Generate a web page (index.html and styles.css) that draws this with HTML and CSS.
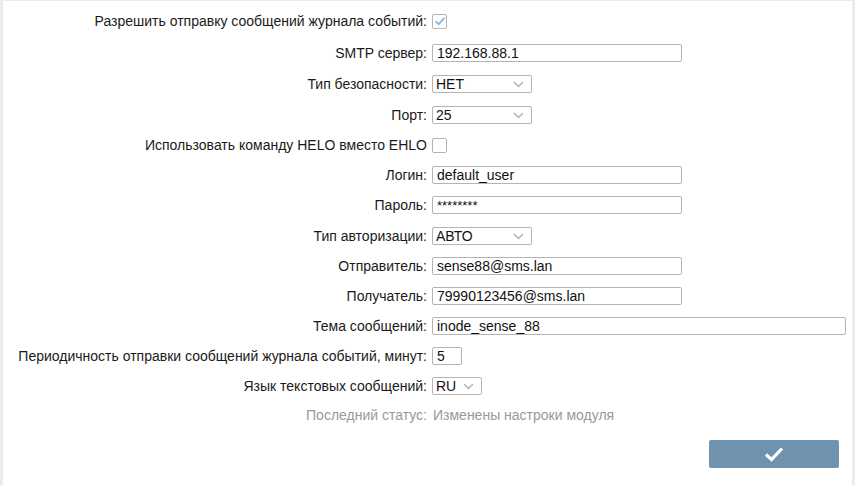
FILE: index.html
```
<!DOCTYPE html>
<html>

<head>
    <title>Настройки журнала событий</title>
    <link rel="stylesheet" href="styles.css">
</head>

<body>
    <div class="panel">
        <div class="form">
            <div class="row first">
                <label>Разрешить отправку сообщений журнала событий:</label>
                <span class="checkbox">
                    <svg width="12" height="10" viewBox="0 0 12 10">
                        <path d="M1.5 5.2 L4.6 8.2 L10.5 1.8" fill="none" stroke="#86b8e4" stroke-width="1.8" />
                    </svg>
                </span>
            </div>
            <div class="row">
                <label>SMTP сервер:</label>
                <input type="text" class="text" value="192.168.88.1">
            </div>
            <div class="row sel">
                <label>Тип безопасности:</label>
                <div class="select w100">
                    <select><option>НЕТ</option></select>
                    <svg class="arrow" width="11" height="7" viewBox="0 0 11 7"><path d="M1 1 L5.5 5.5 L10 1" fill="none" stroke="#b0b0b0" stroke-width="1.4" /></svg>
                </div>
            </div>
            <div class="row sel">
                <label>Порт:</label>
                <div class="select w100">
                    <select><option>25</option></select>
                    <svg class="arrow" width="11" height="7" viewBox="0 0 11 7"><path d="M1 1 L5.5 5.5 L10 1" fill="none" stroke="#b0b0b0" stroke-width="1.4" /></svg>
                </div>
            </div>
            <div class="row">
                <label>Использовать команду HELO вместо EHLO</label>
                <span class="checkbox"></span>
            </div>
            <div class="row">
                <label>Логин:</label>
                <input type="text" class="text" value="default_user">
            </div>
            <div class="row">
                <label>Пароль:</label>
                <input type="text" class="text pass" value="********">
            </div>
            <div class="row sel">
                <label>Тип авторизации:</label>
                <div class="select w100">
                    <select><option>АВТО</option></select>
                    <svg class="arrow" width="11" height="7" viewBox="0 0 11 7"><path d="M1 1 L5.5 5.5 L10 1" fill="none" stroke="#b0b0b0" stroke-width="1.4" /></svg>
                </div>
            </div>
            <div class="row">
                <label>Отправитель:</label>
                <input type="text" class="text" value="sense88@sms.lan">
            </div>
            <div class="row">
                <label>Получатель:</label>
                <input type="text" class="text" value="79990123456@sms.lan">
            </div>
            <div class="row">
                <label>Тема сообщений:</label>
                <input type="text" class="text wide" value="inode_sense_88">
            </div>
            <div class="row">
                <label>Периодичность отправки сообщений журнала событий, минут:</label>
                <input type="text" class="text short" value="5">
            </div>
            <div class="row">
                <label>Язык текстовых сообщений:</label>
                <div class="select w50">
                    <select><option>RU</option></select>
                    <svg class="arrow" width="11" height="7" viewBox="0 0 11 7"><path d="M1 1 L5.5 5.5 L10 1" fill="none" stroke="#b0b0b0" stroke-width="1.4" /></svg>
                </div>
            </div>
            <div class="row status">
                <label>Последний статус:</label>
                <span>Изменены настроки модуля</span>
            </div>
        </div>

        <div class="actions">
            <button class="apply">
                <svg width="20" height="16" viewBox="0 0 20 16">
                    <path d="M2 8.5 L7.5 13.5 L18 2.5" fill="none" stroke="#fff" stroke-width="3.2" stroke-linejoin="miter" />
                </svg>
            </button>
        </div>
    </div>
</body>

</html>
```

FILE: styles.css
```
body {
    margin: 0;
    background-color: #ececec;
    font-family: "Liberation Sans", Arial, sans-serif;
    font-size: 14px;
    color: #1a1a1a;
}

.panel {
    margin: 1px 3px 0 3px;
    height: 484px;
    background-color: #fff;
}

.form {
    padding-top: 3px;
}

.row {
    display: grid;
    grid-template-columns: 424px 1fr;
    column-gap: 5px;
    align-items: center;
    height: 30px;
}

.row.first {
    height: 34px;
}

.row.sel {
    height: 31px;
}

.row.status {
    height: 28px;
}

.row label {
    text-align: right;
    white-space: nowrap;
}

.text {
    box-sizing: border-box;
    width: 250px;
    height: 18px;
    padding: 0 4px;
    border: 1px solid #b4b4b4;
    border-radius: 2px;
    font-family: inherit;
    font-size: 14px;
    color: #111;
    outline: none;
}

.text.wide {
    width: 414px;
}

.text.short {
    width: 30px;
}

.text.pass {
    font-size: 13px;
}

.select {
    position: relative;
    height: 18px;
}

.w100 {
    width: 100px;
}

.w50 {
    width: 50px;
}

.select select {
    box-sizing: border-box;
    width: 100%;
    height: 18px;
    padding: 0 0 0 3px;
    border: 1px solid #b4b4b4;
    border-radius: 2px;
    background: #fff;
    font-family: inherit;
    font-size: 14px;
    color: #111;
    appearance: none;
    -webkit-appearance: none;
    outline: none;
}

.select .arrow {
    position: absolute;
    right: 8px;
    top: 6px;
    pointer-events: none;
}

.checkbox {
    box-sizing: border-box;
    display: flex;
    align-items: center;
    justify-content: center;
    width: 15px;
    height: 15px;
    border: 1px solid #b4b4b4;
    border-radius: 2px;
    background: #fff;
}

.status {
    color: #999;
}

.status span {
    padding-left: 1px;
}

.actions {
    display: flex;
    justify-content: flex-end;
    padding-right: 13px;
    margin-top: 11px;
}

.apply {
    width: 130px;
    height: 28px;
    border: none;
    border-radius: 2px;
    background-color: #6f93ae;
    display: flex;
    align-items: center;
    justify-content: center;
    cursor: pointer;
}
```
